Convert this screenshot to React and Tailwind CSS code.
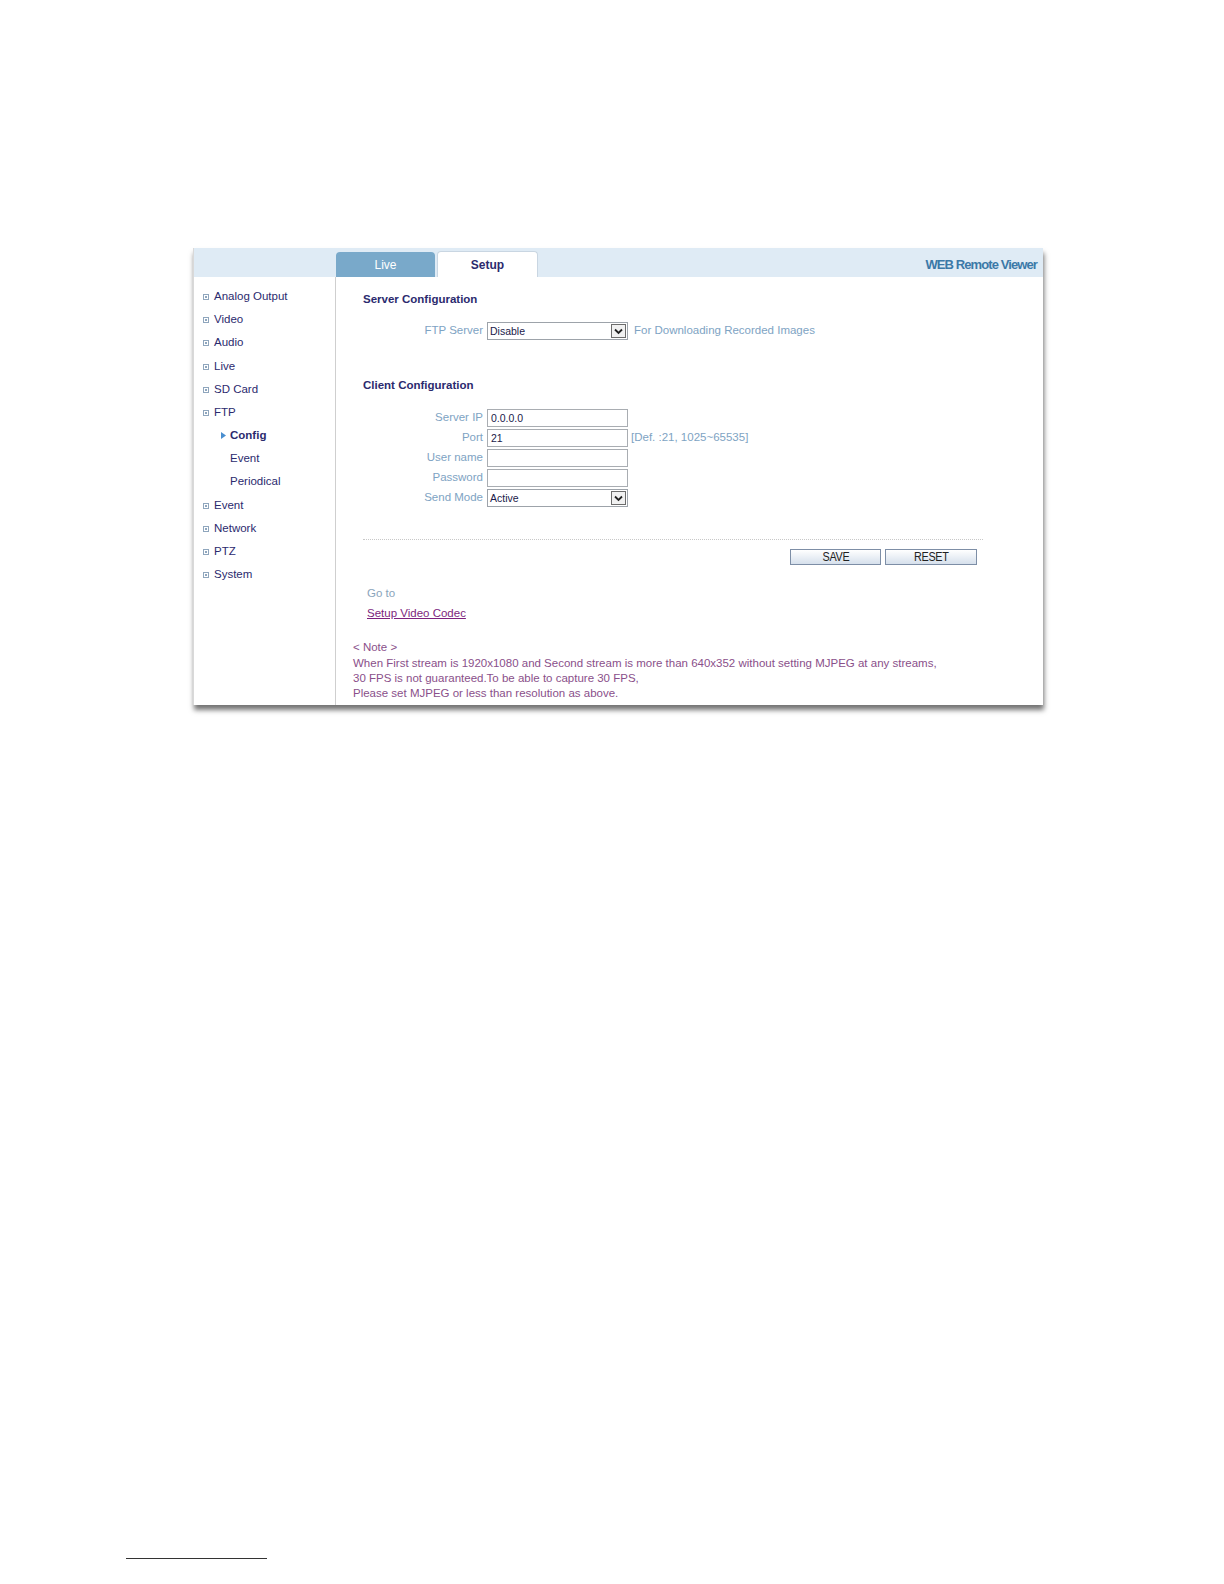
import React from "react";

const navy = "text-[#2b2a6e]";

function Bullet() {
  return (
    <span className="inline-flex items-center justify-center w-[6px] h-[6px] border border-[#8fa6bd] mr-[5px] mt-[1px]">
      <span className="w-[2px] h-[2px] bg-[#8fa6bd]" />
    </span>
  );
}

function SideItem({ label }) {
  return (
    <div className={`h-[23.2px] flex items-center pl-[9px] ${navy}`}>
      <Bullet />
      <span>{label}</span>
    </div>
  );
}

function SubItem({ label, active }) {
  return (
    <div className={`h-[23.2px] flex items-center pl-[27px] ${navy}`}>
      <span className="w-[9px] flex items-center">
        {active && (
          <svg width="5" height="7" viewBox="0 0 5 7">
            <path d="M0 0 L5 3.5 L0 7 Z" fill="#4a8fd0" />
          </svg>
        )}
      </span>
      <span className={active ? "font-bold" : ""}>{label}</span>
    </div>
  );
}

function SelectBox({ value }) {
  return (
    <div className="w-[141px] h-[18px] border border-[#9da3aa] bg-white flex items-center justify-between pl-[2px] pr-[1px]">
      <span className="text-[10.5px] text-[#1a1a4a] leading-none">{value}</span>
      <span className="w-[15px] h-[14px] border border-[#6c6c6c] bg-[#f1f1f1] flex items-center justify-center">
        <svg width="9" height="7" viewBox="0 0 9 7">
          <path d="M1 1.5 L4.5 5 L8 1.5" stroke="#222" strokeWidth="1.8" fill="none" />
        </svg>
      </span>
    </div>
  );
}

function InputBox({ value }) {
  return (
    <div className="w-[141px] h-[18px] border border-[#a9adb2] bg-white flex items-center pl-[3px]">
      <span className="text-[10.5px] text-[#1a1a4a] leading-none">{value}</span>
    </div>
  );
}

function Row({ label, children, extra }) {
  return (
    <div className="h-[20px] flex items-center">
      <div className="w-[124px] text-right pr-[4px] text-[#7ea3c3]">{label}</div>
      {children}
      {extra && <span className="ml-[3px] text-[#7ea3c3]">{extra}</span>}
    </div>
  );
}

function Btn({ label, w }) {
  return (
    <div
      className={`${w} h-[16px] border border-[#7d8ea6] bg-gradient-to-b from-white to-[#d6e0ec] flex items-center justify-center text-[12px] text-[#222] leading-none tracking-[-0.3px]`}
    >
      <span className="scale-x-[0.9] inline-block">{label}</span>
    </div>
  );
}

export default function App() {
  return (
    <div className="w-[1224px] h-[1584px] bg-white relative font-['Liberation_Sans',Arial,sans-serif] text-[11.5px]">
      <div className="pt-[248px] pl-[193px]">
        <div className="w-[850px] h-[457px] bg-white shadow-[1px_5px_5px_rgba(0,0,0,0.55)] border-l border-[#d9d9d9] overflow-hidden flex flex-col">
          <div className="h-[29px] bg-[#dfebf5] flex items-end shrink-0">
            <div className="w-[142px]" />
            <div className="w-[99px] h-[25px] bg-[#79a9ca] rounded-t-[4px] flex items-center justify-center text-white text-[12px]">
              Live
            </div>
            <div className="w-[2px]" />
            <div className="w-[101px] h-[26px] bg-white rounded-t-[4px] border border-b-0 border-[#c9d6e2] flex items-center justify-center text-[12px] font-bold text-[#2b2a6e]">
              Setup
            </div>
            <div className="flex-1" />
            <div className="self-center mt-[4px] pr-[6px] text-[13px] font-bold tracking-[-0.9px] text-[#3b79a8]">
              WEB Remote Viewer
            </div>
          </div>
          <div className="flex flex-1">
            <div className="w-[142px] border-r border-[#cfcfcf] pt-[8px] shrink-0">
              <SideItem label="Analog Output" />
              <SideItem label="Video" />
              <SideItem label="Audio" />
              <SideItem label="Live" />
              <SideItem label="SD Card" />
              <SideItem label="FTP" />
              <SubItem label="Config" active />
              <SubItem label="Event" />
              <SubItem label="Periodical" />
              <SideItem label="Event" />
              <SideItem label="Network" />
              <SideItem label="PTZ" />
              <SideItem label="System" />
            </div>
            <div className="flex-1 flex flex-col">
              <div className="pl-[27px] pt-[15px]">
                <div className={`font-bold ${navy} h-[14px] leading-[14px]`}>Server Configuration</div>
                <div className="mt-[15px]">
                  <Row label="FTP Server" extra={<span className="ml-[3px]">For Downloading Recorded Images</span>}>
                    <SelectBox value="Disable" />
                  </Row>
                </div>
                <div className={`font-bold ${navy} mt-[37px] h-[14px] leading-[14px]`}>Client Configuration</div>
                <div className="mt-[16px]">
                  <Row label="Server IP">
                    <InputBox value="0.0.0.0" />
                  </Row>
                  <Row label="Port" extra="[Def. :21, 1025~65535]">
                    <InputBox value="21" />
                  </Row>
                  <Row label="User name">
                    <InputBox value="" />
                  </Row>
                  <Row label="Password">
                    <InputBox value="" />
                  </Row>
                  <Row label="Send Mode">
                    <SelectBox value="Active" />
                  </Row>
                </div>
                <div className="w-[620px] mt-[31px] border-t border-dotted border-[#c8c8c8]" />
                <div className="w-[614px] flex justify-end gap-[4px] mt-[9px]">
                  <Btn label="SAVE" w="w-[91px]" />
                  <Btn label="RESET" w="w-[92px]" />
                </div>
                <div className="pl-[4px] mt-[21px] text-[#8aa4bb] h-[14px] leading-[14px]">Go to</div>
                <div className="pl-[4px] mt-[6px] text-[#7d1f7d] underline h-[14px] leading-[14px]">Setup Video Codec</div>
              </div>
              <div className="pl-[17px] mt-[20px] text-[#8a4f8a] leading-[15px]">
                <div>&lt; Note &gt;</div>
                <div className="mt-[1px]">
                  When First stream is 1920x1080 and Second stream is more than 640x352 without setting MJPEG at any streams,
                </div>
                <div>30 FPS is not guaranteed.To be able to capture 30 FPS,</div>
                <div>Please set MJPEG or less than resolution as above.</div>
              </div>
            </div>
          </div>
        </div>
      </div>
      <div className="absolute left-[126px] top-[1558px] w-[141px] h-px bg-[#333]" />
    </div>
  );
}
